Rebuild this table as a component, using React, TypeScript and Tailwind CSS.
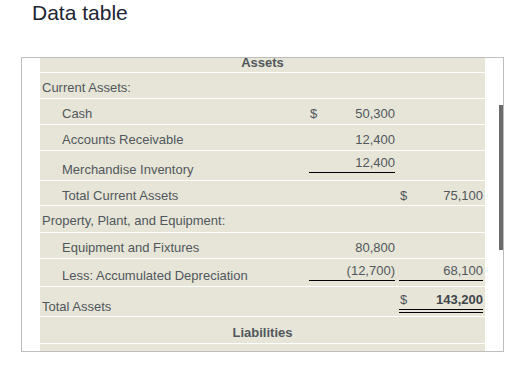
import React from "react";

type Num = { dollar?: boolean; value: string; bold?: boolean };

const cellText = "leading-[15px]";

const Amount = ({ n, line }: { n?: Num; line?: "single" | "double" }) => {
  if (!n) return <div className="w-[90px]" />;
  const lineCls =
    line === "single"
      ? "border-b border-black pb-[2px]"
      : line === "double"
      ? "border-b-[4px] border-double border-black pb-[2px]"
      : "";
  return (
    <div className={`flex justify-between ${cellText} ${lineCls}`}>
      <span className="pl-px">{n.dollar ? "$" : ""}</span>
      <span className={n.bold ? "font-bold text-[#3f454b]" : ""}>{n.value}</span>
    </div>
  );
};

const Row = ({
  label,
  indent,
  h,
  pb = "pb-[3px]",
  c1,
  c2,
  line1,
  line2,
  numPb = "pb-[3px]",
}: {
  label: string;
  indent?: boolean;
  h: string;
  pb?: string;
  c1?: Num;
  c2?: Num;
  line1?: "single" | "double";
  line2?: "single" | "double";
  numPb?: string;
}) => (
  <div className={`flex items-end border-b border-white bg-[#e6e5d7] ${h}`}>
    <div className={`flex-1 ${cellText} ${pb} ${indent ? "pl-[22px]" : "pl-[2px]"}`}>
      {label}
    </div>
    <div className={`w-[90px] pl-[4px] ${numPb}`}>
      {c1 ? <Amount n={c1} line={line1} /> : null}
    </div>
    <div className={`w-[90px] pl-[4px] pr-[2px] ${numPb}`}>
      {c2 ? <Amount n={c2} line={line2} /> : null}
    </div>
  </div>
);

const Heading = ({ text, h, pb, lead }: { text: string; h: string; pb: string; lead: string }) => (
  <div className={`flex items-end justify-center border-b border-white bg-[#e6e5d7] font-bold ${h}`}>
    <div className={`${lead} ${pb}`}>{text}</div>
  </div>
);

export default function App() {
  return (
    <div className="w-[517px] h-[377px] bg-white font-['Liberation_Sans',Arial,sans-serif] overflow-hidden">
      <div className="pl-[32px] pt-px text-[21px] leading-[24px] text-[#1d2433]">Data table</div>
      <div className="mt-[32px] ml-[21px] w-[483px] h-[295px] border border-[#bdbdbd] flex overflow-hidden text-[13px] text-[#51575d]">
        <div className="w-[18px]" />
        <div className="w-[445px] flex flex-col">
          <Heading text="Assets" h="h-[15px]" pb="pb-[4px]" lead="leading-[10px]" />
          <Row label="Current Assets:" h="h-[26px]" />
          <Row label="Cash" indent h="h-[26px]" c1={{ dollar: true, value: "50,300" }} />
          <Row label="Accounts Receivable" indent h="h-[26px]" c1={{ value: "12,400" }} />
          <Row
            label="Merchandise Inventory"
            indent
            h="h-[30px]"
            c1={{ value: "12,400" }}
            line1="single"
            numPb="pb-[7px]"
          />
          <Row
            label="Total Current Assets"
            indent
            h="h-[25px]"
            pb="pb-[2px]"
            numPb="pb-[2px]"
            c2={{ dollar: true, value: "75,100" }}
          />
          <Row label="Property, Plant, and Equipment:" h="h-[27px]" pb="pb-[4px]" />
          <Row label="Equipment and Fixtures" indent h="h-[26px]" c1={{ value: "80,800" }} />
          <Row
            label="Less: Accumulated Depreciation"
            indent
            h="h-[28px]"
            c1={{ value: "(12,700)" }}
            c2={{ value: "68,100" }}
            line1="single"
            line2="single"
            numPb="pb-[5px]"
          />
          <Row
            label="Total Assets"
            h="h-[30px]"
            pb="pb-[2px]"
            c2={{ dollar: true, value: "143,200", bold: true }}
            line2="double"
            numPb="pb-[3px]"
          />
          <Heading text="Liabilities" h="h-[27px]" pb="pb-[3px]" lead="leading-[15px]" />
          <div className="h-[7px] bg-[#e6e5d7]" />
        </div>
        <div className="w-[14px]" />
        <div className="w-[4px]">
          <div className="mt-[47px] h-[145px] w-[4px] bg-[#6b6b6b]" />
        </div>
      </div>
    </div>
  );
}
